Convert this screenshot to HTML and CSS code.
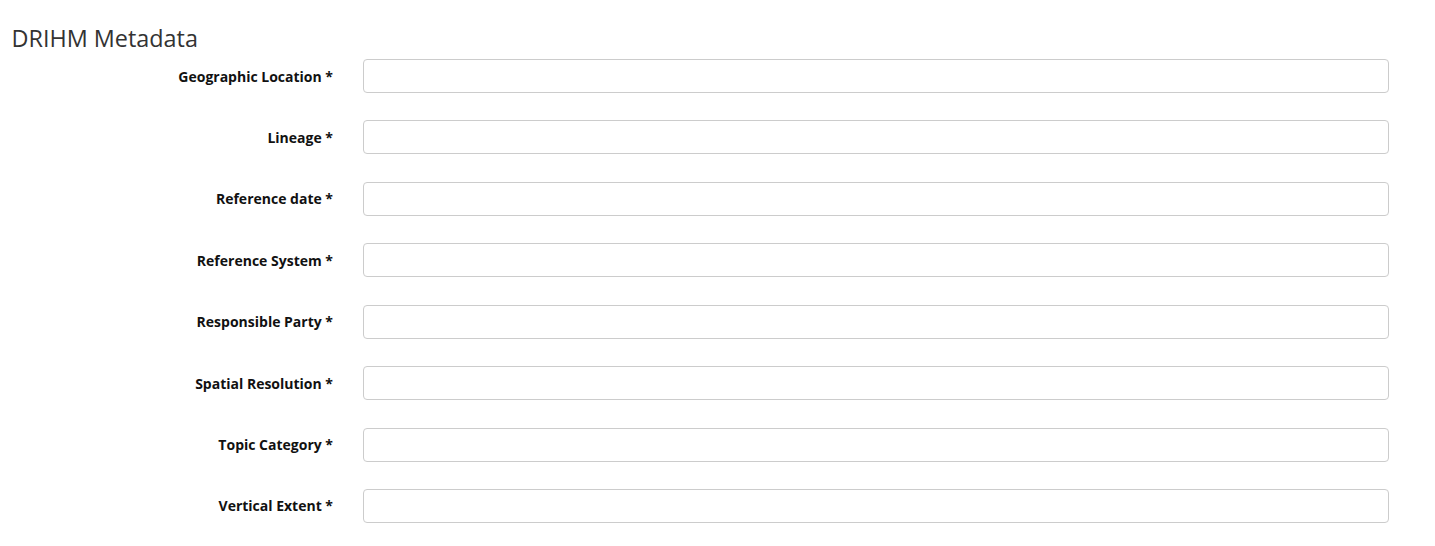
FILE: index.html
```html
<!DOCTYPE html>
<html lang="en">
<head>
  <meta charset="UTF-8">
  <meta name="viewport" content="width=device-width, initial-scale=1.0">
  <title>DRIHM Metadata</title>
  <link rel="stylesheet" href="styles.css">
</head>
<body>
  <div class="container">
    <h3>DRIHM Metadata</h3>
    <form class="metadata-form">
      <div class="form-group">
        <label for="location">Geographic Location *</label>
        <input type="text" id="location">
      </div>
      <div class="form-group">
        <label for="lineage">Lineage *</label>
        <input type="text" id="lineage">
      </div>
      <div class="form-group">
        <label for="refdate">Reference date *</label>
        <input type="text" id="refdate">
      </div>
      <div class="form-group">
        <label for="refsystem">Reference System *</label>
        <input type="text" id="refsystem">
      </div>
      <div class="form-group">
        <label for="party">Responsible Party *</label>
        <input type="text" id="party">
      </div>
      <div class="form-group">
        <label for="resolution">Spatial Resolution *</label>
        <input type="text" id="resolution">
      </div>
      <div class="form-group">
        <label for="topic">Topic Category *</label>
        <input type="text" id="topic">
      </div>
      <div class="form-group">
        <label for="extent">Vertical Extent *</label>
        <input type="text" id="extent">
      </div>
    </form>
  </div>
</body>
</html>
```

FILE: styles.css
```css
body {
  margin: 0;
  font-family: "Open Sans", sans-serif;
  font-size: 14px;
  color: #333;
}
.container {
  padding: 25.5px 46px 20px 8px;
}
h3 {
  margin: 0 0 7.8px 3.5px;
  font-size: 23.4px;
  font-weight: normal;
  line-height: 1.1;
}
.metadata-form {
  display: flex;
  flex-direction: column;
  gap: 27.43px;
}
.form-group {
  display: grid;
  grid-template-columns: 325px 1fr;
  column-gap: 30px;
}
label {
  text-align: right;
  font-weight: bold;
  color: #111;
  padding-top: 7.5px;
  line-height: 20px;
}
input {
  height: 34px;
  box-sizing: border-box;
  border: 1px solid #ccc;
  border-radius: 4px;
  padding: 6px 12px;
  font-family: inherit;
  font-size: 14px;
}
```
